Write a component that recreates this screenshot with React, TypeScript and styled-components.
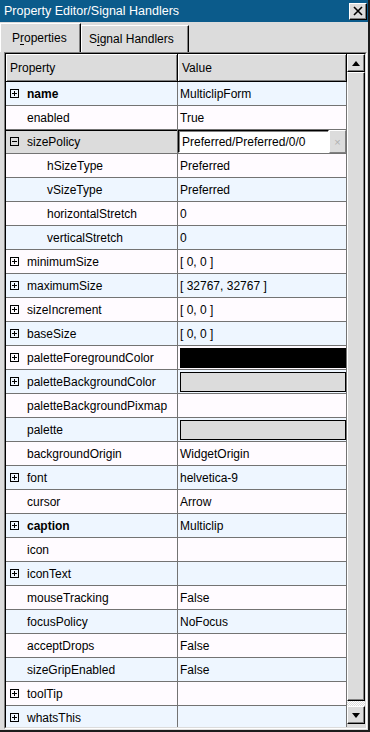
import React from 'react';
import styled, { createGlobalStyle, css } from 'styled-components';

const GlobalStyle = createGlobalStyle`
  html, body { margin: 0; padding: 0; background: #dcdcdc; }
  body {
    font-family: "Liberation Sans", Arial, Helvetica, sans-serif;
    font-size: 12px;
    color: #000;
  }
  * { box-sizing: border-box; }
`;

const Window = styled.div`
  width: 370px;
  height: 732px;
  display: flex;
  flex-direction: column;
  background: #dcdcdc;
  border-right: 2px solid #1c1c1c;
  border-bottom: 2px solid #1c1c1c;
  overflow: hidden;
`;

const TitleBar = styled.div`
  height: 22px;
  flex: none;
  display: flex;
  align-items: center;
  justify-content: space-between;
  padding-left: 4px;
  background: #0b5b8b;
  color: #fff;
  font-size: 12.5px;
`;

const CloseButton = styled.div`
  width: 18px;
  height: 17px;
  margin-right: 1px;
  display: flex;
  align-items: center;
  justify-content: center;
  background: #dcdcdc;
  border: 1px solid;
  border-color: #fff #000 #000 #fff;
  box-shadow: inset -1px -1px 0 #808080;
`;

const TabBar = styled.div`
  height: 30px;
  flex: none;
  display: flex;
  align-items: flex-end;
`;

const Tab = styled.div<{ $active?: boolean; $w: number }>`
  width: ${p => p.$w}px;
  height: ${p => (p.$active ? 29 : 27)}px;
  display: flex;
  align-items: center;
  padding-left: ${p => (p.$active ? 11 : 7)}px;
  padding-bottom: 1px;
  font-size: 12px;
  background: #dcdcdc;
  border-top: 1px solid #fff;
  border-left: 1px solid #fff;
  border-right: 1px solid #000;
  box-shadow: inset -1px 0 0 #808080;
  u { text-decoration-thickness: 1px; text-underline-offset: 2px; }
`;

const Frame = styled.div`
  flex: 1;
  min-height: 0;
  margin: 0 0 1px 4px;
  width: 363px;
  border: 1px solid;
  border-color: #808080 #fff #fff #808080;
  display: flex;
`;

const FrameInner = styled.div`
  flex: 1;
  min-height: 0;
  display: flex;
  border: 1px solid;
  border-color: #000 #dcdcdc #dcdcdc #000;
  overflow: hidden;
`;

const TableArea = styled.div`
  width: 341px;
  flex: none;
  display: flex;
  flex-direction: column;
  overflow: hidden;
  background: #fffbff;
`;

const HeaderRow = styled.div`
  display: grid;
  grid-template-columns: 172px 169px;
  height: 28px;
  flex: none;
`;

const HeaderCell = styled.div`
  display: flex;
  align-items: center;
  padding-left: 4px;
  background: #dcdcdc;
  border-right: 1px solid #000;
  border-bottom: 1px solid #000;
  box-shadow: inset 1px 1px 0 #fff, inset -1px -1px 0 #808080;
`;

const Row = styled.div<{ $alt: boolean }>`
  display: grid;
  grid-template-columns: 172px 169px;
  height: 24px;
  flex: none;
  background: ${p => (p.$alt ? '#eef6ff' : '#fffbff')};
`;

const PropCell = styled.div<{ $indent: number; $bold?: boolean; $selected?: boolean }>`
  display: flex;
  align-items: center;
  gap: 8px;
  padding-left: ${p => p.$indent}px;
  border-right: 1px solid #737373;
  border-bottom: 1px solid #737373;
  font-weight: ${p => (p.$bold ? 'bold' : 'normal')};
  white-space: nowrap;
  overflow: hidden;
  ${p =>
    p.$selected &&
    css`
      background: #dcdcdc;
      box-shadow: inset 0 1px 0 #000;
    `}
`;

const ValueCell = styled.div<{ $selected?: boolean }>`
  display: flex;
  align-items: center;
  padding-left: 2px;
  border-right: 1px solid #737373;
  border-bottom: 1px solid #737373;
  white-space: nowrap;
  overflow: hidden;
  ${p =>
    p.$selected &&
    css`
      padding-left: 0;
      align-items: stretch;
      background: #dcdcdc;
    `}
`;

const LineEdit = styled.div`
  flex: 1;
  display: flex;
  align-items: center;
  padding-left: 3px;
  background: #fff;
  border: 1px solid;
  border-color: #000 #fff #fff #000;
  box-shadow: inset 1px 1px 0 #808080;
`;

const ClearButton = styled.div`
  width: 17px;
  display: flex;
  align-items: center;
  justify-content: center;
  color: #b0b0b0;
  font-size: 11px;
  background: #dcdcdc;
  border: 1px solid;
  border-color: #fff #808080 #808080 #fff;
`;

const Swatch = styled.div<{ $color: string }>`
  flex: 1;
  align-self: stretch;
  margin: 2px 0 1px 0;
  background: ${p => p.$color};
  border: 1px solid #000;
`;

const ScrollBar = styled.div`
  width: 18px;
  flex: none;
  display: flex;
  flex-direction: column;
  background: #dcdcdc;
  padding-bottom: 3px;
`;

const raised = css`
  background: #dcdcdc;
  border: 1px solid;
  border-color: #fff #000 #000 #fff;
  box-shadow: inset -1px -1px 0 #808080;
`;

const ArrowButton = styled.div`
  height: 18px;
  flex: none;
  display: flex;
  align-items: center;
  justify-content: center;
  ${raised}
`;

const Thumb = styled.div`
  flex: 1;
  ${raised}
`;

const Track = styled.div`
  height: 5px;
  flex: none;
  background: repeating-conic-gradient(#dcdcdc 0 25%, #fff 0 50%) 0 0 / 2px 2px;
`;

type Prop = {
  name: string;
  value?: string;
  exp?: 'plus' | 'minus';
  bold?: boolean;
  child?: boolean;
  selected?: boolean;
  swatch?: string;
};

const props: Prop[] = [
  { name: 'name', value: 'MulticlipForm', exp: 'plus', bold: true },
  { name: 'enabled', value: 'True' },
  { name: 'sizePolicy', value: 'Preferred/Preferred/0/0', exp: 'minus', selected: true },
  { name: 'hSizeType', value: 'Preferred', child: true },
  { name: 'vSizeType', value: 'Preferred', child: true },
  { name: 'horizontalStretch', value: '0', child: true },
  { name: 'verticalStretch', value: '0', child: true },
  { name: 'minimumSize', value: '[ 0, 0 ]', exp: 'plus' },
  { name: 'maximumSize', value: '[ 32767, 32767 ]', exp: 'plus' },
  { name: 'sizeIncrement', value: '[ 0, 0 ]', exp: 'plus' },
  { name: 'baseSize', value: '[ 0, 0 ]', exp: 'plus' },
  { name: 'paletteForegroundColor', swatch: '#000', exp: 'plus' },
  { name: 'paletteBackgroundColor', swatch: '#dcdcdc', exp: 'plus' },
  { name: 'paletteBackgroundPixmap' },
  { name: 'palette', swatch: '#dcdcdc' },
  { name: 'backgroundOrigin', value: 'WidgetOrigin' },
  { name: 'font', value: 'helvetica-9', exp: 'plus' },
  { name: 'cursor', value: 'Arrow' },
  { name: 'caption', value: 'Multiclip', exp: 'plus', bold: true },
  { name: 'icon' },
  { name: 'iconText', exp: 'plus' },
  { name: 'mouseTracking', value: 'False' },
  { name: 'focusPolicy', value: 'NoFocus' },
  { name: 'acceptDrops', value: 'False' },
  { name: 'sizeGripEnabled', value: 'False' },
  { name: 'toolTip', exp: 'plus' },
  { name: 'whatsThis', exp: 'plus' },
];

function ExpandBox({ open }: { open?: boolean }) {
  return (
    <svg width="9" height="9" viewBox="0 0 9 9" style={{ flex: 'none' }}>
      <rect x="0.5" y="0.5" width="8" height="8" fill="none" stroke="#000" />
      <line x1="2" y1="4.5" x2="7" y2="4.5" stroke="#000" />
      {!open && <line x1="4.5" y1="2" x2="4.5" y2="7" stroke="#000" />}
    </svg>
  );
}

function PropertyRow({ p, index }: { p: Prop; index: number }) {
  const indent = p.exp ? 4 : p.child ? 41 : 21;
  return (
    <Row $alt={index % 2 === 0}>
      <PropCell $indent={indent} $bold={p.bold} $selected={p.selected}>
        {p.exp && <ExpandBox open={p.exp === 'minus'} />}
        <span>{p.name}</span>
      </PropCell>
      <ValueCell $selected={p.selected}>
        {p.selected ? (
          <>
            <LineEdit>{p.value}</LineEdit>
            <ClearButton>×</ClearButton>
          </>
        ) : p.swatch ? (
          <Swatch $color={p.swatch} />
        ) : (
          p.value
        )}
      </ValueCell>
    </Row>
  );
}

export default function App() {
  return (
    <>
      <GlobalStyle />
      <Window>
        <TitleBar>
          <span>Property Editor/Signal Handlers</span>
          <CloseButton>
            <svg width="10" height="10" viewBox="0 0 10 10">
              <path d="M1 1 L9 9 M9 1 L1 9" stroke="#000" strokeWidth="1.6" />
            </svg>
          </CloseButton>
        </TitleBar>

        <TabBar>
          <Tab $active $w={81}>
            <span>P<u>r</u>operties</span>
          </Tab>
          <Tab $w={108}>
            <span>S<u>i</u>gnal Handlers</span>
          </Tab>
        </TabBar>

        <Frame>
          <FrameInner>
            <TableArea>
              <HeaderRow>
                <HeaderCell>Property</HeaderCell>
                <HeaderCell>Value</HeaderCell>
              </HeaderRow>
              {props.map((p, i) => (
                <PropertyRow key={p.name} p={p} index={i} />
              ))}
            </TableArea>
            <ScrollBar>
              <ArrowButton>
                <svg width="8" height="5" viewBox="0 0 8 5">
                  <path d="M0 5 L4 0 L8 5 Z" fill="#000" />
                </svg>
              </ArrowButton>
              <Thumb />
              <Track />
              <ArrowButton>
                <svg width="8" height="5" viewBox="0 0 8 5">
                  <path d="M0 0 L8 0 L4 5 Z" fill="#000" />
                </svg>
              </ArrowButton>
            </ScrollBar>
          </FrameInner>
        </Frame>
      </Window>
    </>
  );
}
